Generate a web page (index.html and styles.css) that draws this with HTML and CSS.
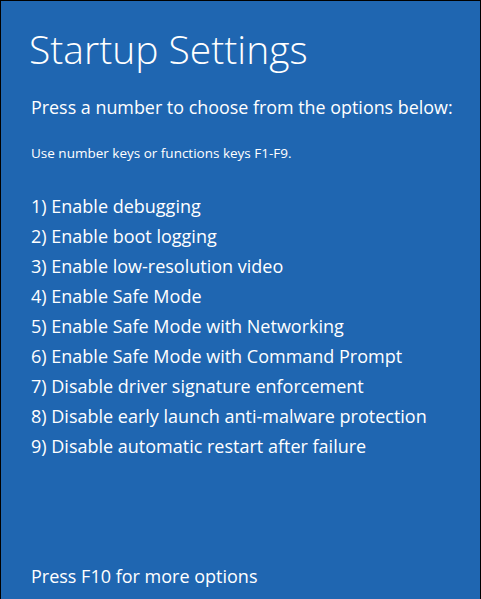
FILE: index.html
```html
<!DOCTYPE html>
<html>
<head>
<meta charset="utf-8">
<link rel="stylesheet" href="styles.css">
</head>
<body>
<div class="screen">
  <h1 class="title">Startup Settings</h1>
  <p class="lead">Press a number to choose from the options below:</p>
  <p class="hint">Use number keys or functions keys F1-F9.</p>
  <ol class="options">
    <li>1) Enable debugging</li>
    <li>2) Enable boot logging</li>
    <li>3) Enable low-resolution video</li>
    <li>4) Enable Safe Mode</li>
    <li>5) Enable Safe Mode with Networking</li>
    <li>6) Enable Safe Mode with Command Prompt</li>
    <li>7) Disable driver signature enforcement</li>
    <li>8) Disable early launch anti-malware protection</li>
    <li>9) Disable automatic restart after failure</li>
  </ol>
  <p class="footer">Press F10 for more options</p>
</div>
</body>
</html>
```
FILE: styles.css
```css
html, body {
  margin: 0;
  padding: 0;
  background: #000;
}
.screen {
  box-sizing: border-box;
  width: 479px;
  height: 598px;
  margin: 1px 0 0 1px;
  background: #1f66b1;
  color: #fff;
  font-family: "Open Sans", "Noto Sans", sans-serif;
  padding: 0 0 0 28px;
  display: flex;
  flex-direction: column;
}
.title {
  margin: 20px 0 0 0;
  font-size: 39px;
  font-weight: 300;
  line-height: 56px;
  letter-spacing: 0;
}
.lead {
  margin: 17px 0 0 2px;
  font-size: 17.9px;
  line-height: 26px;
}
.hint {
  margin: 23px 0 0 2px;
  font-size: 13.5px;
  line-height: 20px;
}
.options {
  list-style: none;
  margin: 28px 0 0 2px;
  padding: 0;
  font-size: 18px;
  line-height: 30px;
}
.footer {
  margin: auto 0 8px 2px;
  font-size: 18px;
  line-height: 30px;
}
```
